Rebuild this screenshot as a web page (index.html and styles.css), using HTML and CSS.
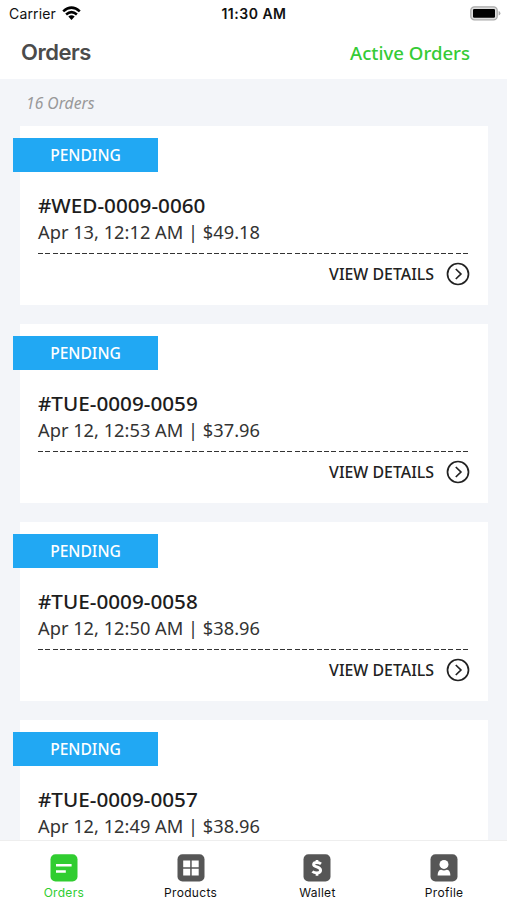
FILE: index.html
```html
<!DOCTYPE html>
<html lang="en">
<head>
<meta charset="utf-8">
<title>Orders</title>
<link rel="stylesheet" href="styles.css">
</head>
<body>
<div class="app">
  <div class="status">
    <div class="carrier"><span>Carrier</span>
      <svg width="19" height="15" viewBox="0 0 19 15" fill="none" stroke="#000" stroke-width="2.6"><path d="M1.2 5.4Q9.5-2 17.8 5.4M4.1 8.5Q9.5 3.7 14.9 8.5"/><path d="M6.3 10.6Q9.5 7.8 12.7 10.6L9.5 14Z" fill="#000" stroke="none"/></svg>
    </div>
    <div class="time">11:30 AM</div>
    <svg class="battery" width="31" height="15" viewBox="0 0 31 15"><rect x=".8" y=".8" width="26.4" height="13" rx="3.6" fill="#ddd" stroke="#aaa" stroke-width="1.3"/><rect x="3" y="2.9" width="22" height="8.8" rx="1.2"/><path d="M28.6 5Q30.4 5.5 30.4 7.3T28.6 9.6Z" fill="#aaa"/></svg>
  </div>
  <header class="header"><h1>Orders</h1><a class="filter">Active Orders</a></header>
  <main class="list">
    <p class="count">16 Orders</p>
    <article class="card"><div class="badge"><span>PENDING</span></div><h2><span>#WED-0009-0060</span></h2><p class="meta">Apr 13, 12:12 AM | $49.18</p><div class="rule"></div><div class="details"><span>VIEW DETAILS</span><svg width="24" height="24" viewBox="0 0 24 24"><circle cx="12" cy="12" r="10.5"/><path d="M9.8 7L14.9 12L9.8 17"/></svg></div></article>
    <article class="card"><div class="badge"><span>PENDING</span></div><h2><span>#TUE-0009-0059</span></h2><p class="meta">Apr 12, 12:53 AM | $37.96</p><div class="rule"></div><div class="details"><span>VIEW DETAILS</span><svg width="24" height="24" viewBox="0 0 24 24"><circle cx="12" cy="12" r="10.5"/><path d="M9.8 7L14.9 12L9.8 17"/></svg></div></article>
    <article class="card"><div class="badge"><span>PENDING</span></div><h2><span>#TUE-0009-0058</span></h2><p class="meta">Apr 12, 12:50 AM | $38.96</p><div class="rule"></div><div class="details"><span>VIEW DETAILS</span><svg width="24" height="24" viewBox="0 0 24 24"><circle cx="12" cy="12" r="10.5"/><path d="M9.8 7L14.9 12L9.8 17"/></svg></div></article>
    <article class="card"><div class="badge"><span>PENDING</span></div><h2><span>#TUE-0009-0057</span></h2><p class="meta">Apr 12, 12:49 AM | $38.96</p></article>
  </main>
  <nav class="tabs">
    <a class="tab active"><svg width="28" height="28" viewBox="0 0 28 28"><rect x=".5" y=".3" width="27" height="27.2" rx="5" fill="currentColor"/><path d="M6 11.3H21.6M6 17.4H15.8" stroke="#fff" stroke-width="2.5"/></svg><span>Orders</span></a>
    <a class="tab"><svg width="28" height="28" viewBox="0 0 28 28"><rect x=".5" y=".3" width="27" height="27.2" rx="5" fill="#565656"/><path d="M6.2 6.5h7v6.7h-7zM14.7 6.5h7v6.7h-7zM6.2 14.7h7v6.7h-7zM14.7 14.7h7v6.7h-7z" fill="#fff"/></svg><span>Products</span></a>
    <a class="tab"><svg width="28" height="28" viewBox="0 0 28 28"><rect x=".5" y=".3" width="27" height="27.2" rx="5" fill="#565656"/><path d="M18 9.8C16.8 8.9 15.4 8.5 13.9 8.5C11.6 8.5 10.6 9.2 10.6 10.5C10.6 13.6 17.6 12.3 17.6 16.2C17.6 18 16 18.9 13.7 18.9C12 18.9 10.5 18.4 9.4 17.5" fill="none" stroke="#fff" stroke-width="2.9"/><path d="M14 6V9M14 18V21.7" stroke="#fff" stroke-width="2.7"/></svg><span>Wallet</span></a>
    <a class="tab"><svg width="28" height="28" viewBox="0 0 28 28"><rect x=".5" y=".3" width="27" height="27.2" rx="5" fill="#565656"/><circle cx="14" cy="10.4" r="4.5" fill="#fff"/><path d="M7.6 21.4Q7.8 15.8 11.3 15.8Q14 17.3 16.7 15.8Q20.2 15.8 20.4 21.4Z" fill="#fff"/></svg><span>Profile</span></a>
  </nav>
</div>
</body>
</html>
```
FILE: styles.css
```css
* { box-sizing: border-box; }
body { margin: 0; font-family: "Noto Sans", sans-serif; color: #222; background: #f3f5f9; }
h1, h2, p { margin: 0; }
svg { display: block; flex: none; }
.app { height: 900px; display: flex; flex-direction: column; overflow: hidden; white-space: nowrap; }
.status { flex: none; height: 28px; background: #fff; display: grid; grid-template-columns: 1fr auto 1fr; align-items: center; padding: 0 6px 0 9px; font: 400 14px/28px Inter, sans-serif; color: #111; }
.carrier { display: flex; align-items: center; gap: 6px; letter-spacing: .15px; }
.carrier svg { margin-top: -2px; }
.time { font-weight: 600; letter-spacing: .5px; margin-left: -2px; }
.battery { justify-self: end; margin-top: -1px; }
.header { flex: none; height: 51px; background: #fff; display: flex; justify-content: space-between; align-items: center; padding: 0 37px 3px 21px; }
.header h1 { font: 600 22px/30px Inter, sans-serif; color: #4b4b4b; letter-spacing: -.5px; }
.filter { font-size: 18.6px; font-weight: 500; line-height: 28px; padding-top: 1px; color: #35cb35; }
.list { flex: 1; min-height: 0; overflow: hidden; padding: 0 19px 0 19.5px; }
.count { height: 46.9px; padding: 0 6.5px; font-size: 15.7px; line-height: 48px; font-style: italic; color: #999; }
.card { height: 179.5px; margin-bottom: 18.4px; padding: 12px 19px 0 18.5px; background: #fff; }
.badge { width: 145px; height: 34px; margin-left: -25px; background: #21a8f3; color: #fff; font-size: 15.6px; line-height: 34px; font-weight: 500; text-align: center; }
.card h2 { margin-top: 19px; font-size: 20.7px; line-height: 28px; font-weight: 500; color: #1d1d1d; }
.meta { font-size: 18.25px; line-height: 26px; color: #333; }
.rule { height: 1px; margin-top: 8px; background: repeating-linear-gradient(90deg, #333 0 5px, transparent 5px 7.33px); }
.details { display: flex; justify-content: flex-end; align-items: center; gap: 12px; height: 24px; margin: 8px -1px 0 0; font-size: 15.9px; font-weight: 500; }
.details svg { fill: none; stroke: #222; stroke-width: 1.7; }
.tabs { flex: none; height: 60px; display: grid; grid-template-columns: repeat(4, 1fr); background: #fff; border-top: 1px solid #eee; }
.tab { display: flex; flex-direction: column; align-items: center; padding: 13px 0 0 1px; font: 400 12px/15px Inter, sans-serif; color: #111; letter-spacing: .3px; }
.tab span { margin-top: 3px; }
.active { color: #30cd30; }
```
